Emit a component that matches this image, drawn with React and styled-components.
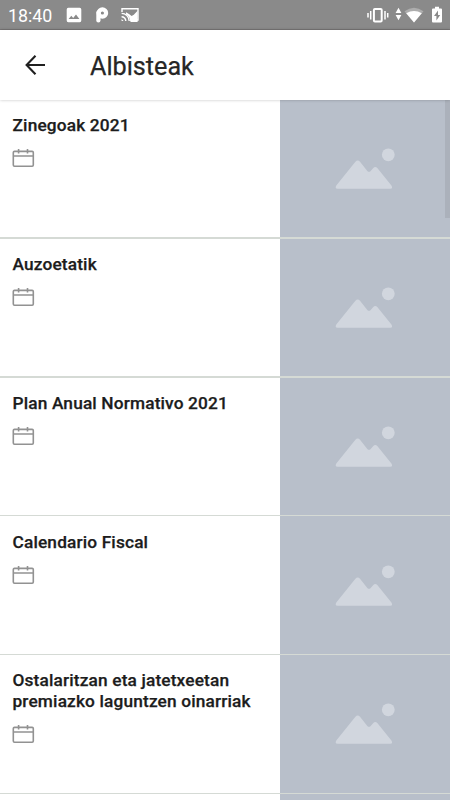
import React from 'react';
import styled, { createGlobalStyle } from 'styled-components';

const news = [
    { title: 'Zinegoak 2021' },
    { title: 'Auzoetatik' },
    { title: 'Plan Anual Normativo 2021' },
    { title: 'Calendario Fiscal' },
    { title: 'Ostalaritzan eta jatetxeetan premiazko laguntzen oinarriak' },
    { title: '' },
];

const CalendarIcon = () => (
    <svg width="24" height="20" viewBox="0 0 24 20" fill="none" stroke="#929292" strokeWidth="1.6">
        <rect x="1.3" y="3.4" width="20" height="14.8" rx="1.2" />
        <path d="M1.3 8h20M6.6 1v4.4M15.5 1v4.4" />
    </svg>
);

const PlaceholderIcon = () => (
    <svg width="60" height="41" viewBox="0 0 60 41" fill="#d1d6de">
        <circle cx="53.3" cy="6.8" r="6.4" />
        <path d="M1.3 37.6 20.2 14q2.5-2.9 5 0l7.1 8.9q1.7 1.9 3.4 0l2.6-2.8q2-2 4 0L56.6 37.8q1.4 2.9-1.3 2.9H2.7q-3.1 0-1.4-3.1z" />
    </svg>
);

const App = () => {
    return(
        <Screen>
            <GlobalStyle />
            <StatusBar>
                <Clock>18:40</Clock>
                <Notifications>
                    <svg width="16" height="16" viewBox="0 0 16 16" fill="#fff">
                        <path fillRule="evenodd" d="M2.3.8h11.4q1.6 0 1.6 1.6v11.2q0 1.6-1.6 1.6H2.3q-1.6 0-1.6-1.6V2.4Q.7.8 2.3.8zM2.6 12h10.8L10 7.4 7.2 11 5.3 8.7z" />
                    </svg>
                    <svg width="14" height="16" viewBox="0 0 14 16" fill="none" stroke="#fff">
                        <circle cx="7.4" cy="6" r="3.7" strokeWidth="4.2" />
                        <path d="M3.4 5.5v7.9" strokeWidth="4.2" strokeLinecap="round" />
                    </svg>
                    <svg width="18" height="16" viewBox="0 0 18 16" fill="none" stroke="#fff" strokeWidth="1.4">
                        <path d="M1 5V1.7h16V13H9" />
                        <path d="M.6 6.4A7.6 7.6 0 0 1 8.2 14M.6 9.8A4.2 4.2 0 0 1 4.8 14" />
                        <path d="M.6 12 2.6 14h-2zM5 5.2 8 7l2.6 2 2.2-1.2 3.8-4V15H9.6Q8.8 9 5 7.4z" fill="#fff" stroke="none" />
                    </svg>
                </Notifications>
                <SystemIcons>
                    <svg width="22" height="16" viewBox="0 0 22 16" fill="none" stroke="#fff" strokeWidth="1.5">
                        <rect x="6.9" y="2" width="7.8" height="12.4" rx="1" strokeWidth="2" />
                        <path d="M3.7 4v8.4M1 6v4.4M18 4v8.4M20.7 6v4.4" />
                    </svg>
                    <svg width="7" height="16" viewBox="0 0 7 16" fill="#fff">
                        <path d="M3.5.7 6.4 6H.6zM3.5 13.3.6 8h5.8z" />
                    </svg>
                    <svg width="20" height="16" viewBox="0 0 20 16" fill="#fff">
                        <path d="M.5 4.2Q10-2.8 19.5 4.2L10 15.6z" opacity=".3" />
                        <path d="M2.2 6.2q7.8-4.6 15.6 0L10 15.6z" />
                    </svg>
                    <svg width="10" height="18" viewBox="0 0 10 18" fill="#fff">
                        <path fillRule="evenodd" d="M3 .8h4v1.8h2q1 0 1 1v12q0 1-1 1H1q-1 0-1-1v-12q0-1 1-1h2zM6 4.5 2 10h2.4v4.4L8.2 9H6z" />
                    </svg>
                </SystemIcons>
            </StatusBar>
            <Toolbar>
                <BackButton aria-label="Back">
                    <svg width="20" height="20" viewBox="0 0 20 20" fill="none" stroke="#202020" strokeWidth="2.1">
                        <path d="M20 10H1.7M10.5.8 1.6 10l8.9 9.2" />
                    </svg>
                </BackButton>
                <h1>Albisteak</h1>
            </Toolbar>
            <List>
                {
                news.map((item, idx) => {
                    return <Row key = {idx}>
                                <Info>
                                    <Title>{ item.title }</Title>
                                    <CalendarIcon />
                                </Info>
                                <Thumbnail>
                                    <PlaceholderIcon />
                                </Thumbnail>
                            </Row>
                })}
                <Scrollbar />
            </List>
        </Screen>
    )
}

export default App;

const GlobalStyle = createGlobalStyle`
    * {
        box-sizing: border-box;
    }
    body {
        margin: 0;
        background: #fff;
        font-family: Roboto, sans-serif;
    }
    svg {
        display: block;
        flex-shrink: 0;
    }
`
const Screen = styled.main`
    display: flex;
    flex-direction: column;
    width: 450px;
    height: 800px;
    overflow: hidden;
    background: #fff;
`
const StatusBar = styled.div`
    display: flex;
    align-items: center;
    flex-shrink: 0;
    height: 30px;
    padding: 0 8px;
    background: #8a8a8a;
    border-bottom: 1px solid #7b7878;
    color: #fff;
`
const Clock = styled.span`
    width: 58px;
    font-size: 17.8px;
    line-height: 30px;
    padding-top: 2px;
`
const Notifications = styled.div`
    display: flex;
    align-items: center;
    gap: 12.5px;
    padding-top: 1px;
`
const SystemIcons = styled.div`
    display: flex;
    align-items: center;
    margin-left: auto;
    padding-top: 1px;
    svg:nth-child(2){
        margin-left: 6px;
    }
    svg:nth-child(3){
        margin-left: 2px;
    }
    svg:nth-child(4){
        margin-left: 8px;
    }
`
const Toolbar = styled.header`
    position: relative;
    z-index: 1;
    display: flex;
    align-items: center;
    flex-shrink: 0;
    height: 70px;
    padding-left: 25px;
    background: #fff;
    box-shadow: 0 0 3px rgba(0, 0, 0, 0.24);
    h1{
        margin: 3px 0 0 45px;
        font-size: 25.2px;
        font-weight: 400;
        color: #262626;
        -webkit-text-stroke: 0.25px #262626;
    }
`
const BackButton = styled.button`
    padding: 0;
    border: 0;
    background: none;
`
const List = styled.section`
    position: relative;
    flex: 1;
    min-height: 0;
    overflow: hidden;
`
/* the divider is the strip of row background left under both cells */
const Row = styled.article`
    display: flex;
    height: 138.8px;
    padding-bottom: 1.4px;
    background: #d5dad5;
`
const Info = styled.div`
    width: 280px;
    padding: 15.3px 12px 0;
    background: #fff;
`
const Title = styled.h2`
    margin: 0 0 12.6px 0.5px;
    font-size: 17.3px;
    font-weight: 500;
    letter-spacing: 0.15px;
    line-height: 20.6px;
    color: #1c1c1c;
    -webkit-text-stroke: 0.25px #1c1c1c;
`
const Thumbnail = styled.div`
    display: flex;
    flex: 1;
    align-items: center;
    justify-content: center;
    background: #b8bfca;
`
const Scrollbar = styled.div`
    position: absolute;
    top: 0;
    right: 0;
    width: 5px;
    height: 118px;
    background: rgba(0, 0, 0, 0.07);
`
